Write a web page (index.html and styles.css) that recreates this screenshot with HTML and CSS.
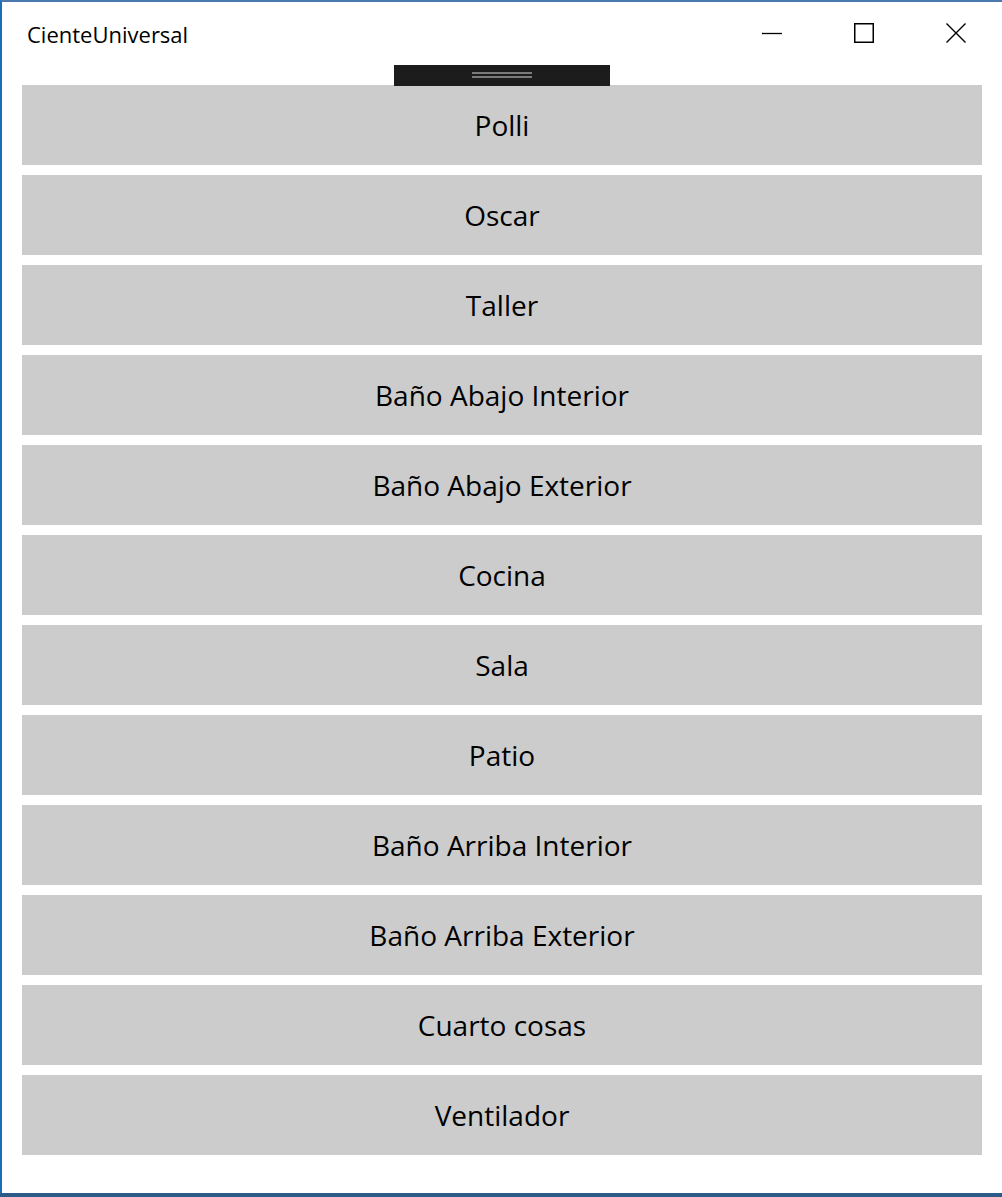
FILE: index.html
```html
<!DOCTYPE html>
<html lang="es">
<head>
<meta charset="utf-8">
<title>CienteUniversal</title>
<link rel="stylesheet" href="styles.css">
</head>
<body>
<div class="window">
  <header class="titlebar">
    <span class="title">CienteUniversal</span>
    <div class="controls">
      <button class="ctrl" aria-label="Minimizar">
        <svg width="20" height="20" viewBox="0 0 20 20"><path d="M0 10.5H20" stroke="#000" stroke-width="1.3" fill="none"/></svg>
      </button>
      <button class="ctrl" aria-label="Maximizar">
        <svg width="20" height="20" viewBox="0 0 20 20"><rect x="0.75" y="0.75" width="18.5" height="18.5" stroke="#000" stroke-width="1.5" fill="none"/></svg>
      </button>
      <button class="ctrl" aria-label="Cerrar">
        <svg width="20" height="20" viewBox="0 0 20 20"><path d="M0.5 0.5L19.5 19.5M19.5 0.5L0.5 19.5" stroke="#000" stroke-width="1.4" fill="none"/></svg>
      </button>
    </div>
    <div class="handle"><span class="grip"></span></div>
  </header>
  <main class="list">
    <button class="item">Polli</button>
    <button class="item">Oscar</button>
    <button class="item">Taller</button>
    <button class="item">Baño Abajo Interior</button>
    <button class="item">Baño Abajo Exterior</button>
    <button class="item">Cocina</button>
    <button class="item">Sala</button>
    <button class="item">Patio</button>
    <button class="item">Baño Arriba Interior</button>
    <button class="item">Baño Arriba Exterior</button>
    <button class="item">Cuarto cosas</button>
    <button class="item">Ventilador</button>
  </main>
  <div class="taskbar"></div>
</div>
</body>
</html>
```
FILE: styles.css
```css
html, body {
  margin: 0;
  padding: 0;
  background: #ffffff;
}
body {
  font-family: "Open Sans", "Noto Sans", sans-serif;
  width: 1002px;
  height: 1197px;
  overflow: hidden;
}
.window {
  position: relative;
  height: 1197px;
  box-sizing: border-box;
  border-left: 2px solid #1b6fb6;
  border-top: 2px solid #4b79ad;
  display: flex;
  flex-direction: column;
  background: #fff;
}
.titlebar {
  position: relative;
  height: 83px;
  display: flex;
  align-items: flex-start;
  justify-content: space-between;
}
.title {
  margin: 17px 0 0 25px;
  font-size: 22px;
  color: #000;
  line-height: 30px;
}
.controls {
  display: flex;
  margin-top: 21px;
  margin-right: 36px;
  gap: 72px;
}
.ctrl {
  border: 0;
  padding: 0;
  margin: 0;
  background: transparent;
  width: 20px;
  height: 20px;
  display: block;
}
.ctrl svg { display: block; }
.handle {
  position: absolute;
  left: 392px;
  top: 63px;
  width: 216px;
  height: 21px;
  background: #1c1c1c;
  display: flex;
  justify-content: center;
  z-index: 2;
}
.grip {
  margin-top: 7px;
  width: 60px;
  height: 6px;
  box-sizing: border-box;
  border-top: 2px solid #7a7a7a;
  border-bottom: 2px solid #7a7a7a;
}
.list {
  display: flex;
  flex-direction: column;
  gap: 10px;
  padding-left: 20px;
}
.item {
  width: 960px;
  height: 80px;
  border: 0;
  margin: 0;
  padding: 0 0 1px;
  background: #cccccc;
  color: #000;
  font-family: "Open Sans", "Noto Sans", sans-serif;
  font-size: 28px;
  text-align: center;
}
.taskbar {
  position: absolute;
  left: -2px;
  right: 0;
  bottom: 0;
  height: 4px;
  background: #2b5b86;
}
```
